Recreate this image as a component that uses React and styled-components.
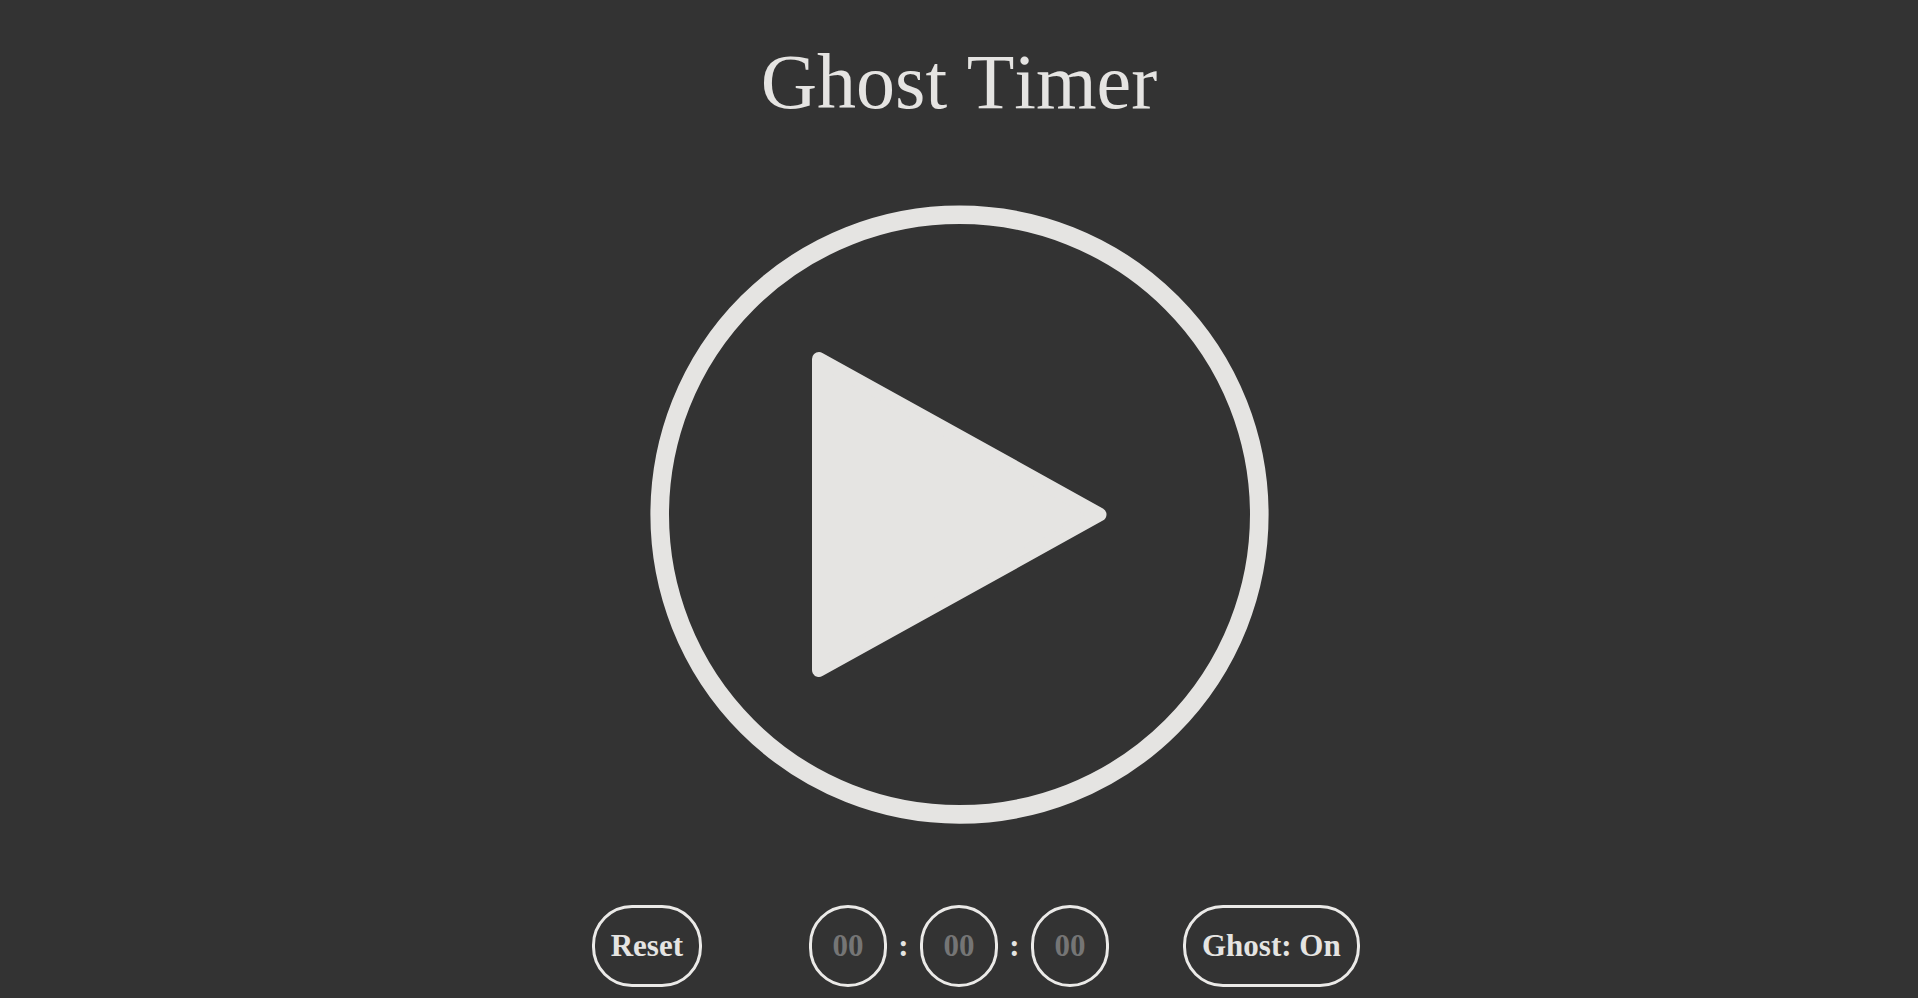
import React, { useEffect, useRef, useState } from "react";
import styled, { createGlobalStyle } from "styled-components";

const light = "#e5e4e2";

const GlobalStyle = createGlobalStyle`
  * { box-sizing: border-box; }
  body {
    margin: 0;
    background: #333;
    color: ${light};
    font-family: "Liberation Serif", "Times New Roman", serif;
  }
`;

const Page = styled.main`
  display: flex;
  flex-direction: column;
  align-items: center;
  min-height: 100vh;
  padding: 37px 16px 8px;
`;

const Title = styled.h1`
  margin: 0;
  font-size: 78px;
  line-height: 90px;
  font-weight: 400;
  font-kerning: none;
`;

const PlayButton = styled.button`
  width: 620px;
  max-width: 100%;
  margin: 78px 0 80px;
  padding: 0;
  border: 0;
  border-radius: 50%;
  background: none;
  color: inherit;
  cursor: pointer;
`;

const PlayArt = styled.svg`
  display: block;
  width: 100%;
`;

const Controls = styled.div`
  display: grid;
  grid-template-columns: 1fr auto 1fr;
  align-items: center;
  width: 100%;
`;

const Side = styled.div`
  display: flex;
  justify-content: ${(p) => (p.$end ? "flex-end" : "flex-start")};
  padding: ${(p) => (p.$end ? "0 107px 0 0" : "0 0 0 74px")};
`;

const PillButton = styled.button`
  height: 82px;
  padding: 0 16px;
  border: 3px solid #ebeae8;
  border-radius: 40px;
  background: none;
  color: inherit;
  font: bold 31px "Liberation Serif", "Times New Roman", serif;
  white-space: nowrap;
  cursor: pointer;
`;

const Time = styled.div`
  display: flex;
  align-items: center;
`;

const TimeInput = styled.input`
  width: 78px;
  height: 82px;
  padding: 0;
  border: 3px solid #ebeae8;
  border-radius: 40px;
  background: none;
  color: inherit;
  font: bold 31px "Liberation Serif", "Times New Roman", serif;
  text-align: center;
  &::placeholder { color: #757575; opacity: 1; }
`;

const Colon = styled.span`
  width: 33px;
  font: bold 31px "Liberation Serif", "Times New Roman", serif;
  text-align: center;
`;

const UNITS = ["Hours", "Minutes", "Seconds"];
const EMPTY = ["", "", ""];

export default function App() {
  const [values, setValues] = useState(EMPTY);
  const [running, setRunning] = useState(false);
  const [ghost, setGhost] = useState(true);
  const latest = useRef(values);
  latest.current = values;

  useEffect(() => {
    if (!running) return undefined;
    const id = setInterval(() => {
      const [h, m, s] = latest.current.map(Number);
      const left = h * 3600 + m * 60 + s - 1;
      if (left < 0) {
        setRunning(false);
        return;
      }
      const parts = [Math.floor(left / 3600), Math.floor(left / 60) % 60, left % 60];
      setValues(parts.map((n) => String(n).padStart(2, "0")));
    }, 1000);
    return () => clearInterval(id);
  }, [running]);

  const edit = (index, text) =>
    setValues(values.map((v, i) => (i === index ? text.replace(/\D/g, "") : v)));

  const reset = () => {
    setRunning(false);
    setValues(EMPTY);
  };

  return (
    <Page>
      <GlobalStyle />
      <Title>Ghost Timer</Title>
      <PlayButton aria-label={running ? "Pause" : "Play"} onClick={() => setRunning(!running)}>
        <PlayArt viewBox="0 0 620 620" aria-hidden="true">
          <circle cx="310.5" cy="309.6" r="299.8" fill="none" stroke={light} strokeWidth="18.6" />
          {running ? (
            <path d="M200 160h70v300h-70zM350 160h70v300h-70z" fill={light} />
          ) : (
            <path
              d="M170 154L450.500 309.500L170 465Z"
              fill={light}
              stroke={light}
              strokeWidth="14"
              strokeLinejoin="round"
            />
          )}
        </PlayArt>
      </PlayButton>
      <Controls>
        <Side $end>
          <PillButton onClick={reset}>Reset</PillButton>
        </Side>
        <Time>
          {UNITS.map((unit, i) => (
            <React.Fragment key={unit}>
              {i > 0 && <Colon>:</Colon>}
              <TimeInput
                aria-label={unit}
                placeholder="00"
                maxLength={2}
                inputMode="numeric"
                value={values[i]}
                onChange={(e) => edit(i, e.target.value)}
              />
            </React.Fragment>
          ))}
        </Time>
        <Side>
          <PillButton aria-pressed={ghost} onClick={() => setGhost(!ghost)}>
            Ghost: {ghost ? "On" : "Off"}
          </PillButton>
        </Side>
      </Controls>
    </Page>
  );
}
